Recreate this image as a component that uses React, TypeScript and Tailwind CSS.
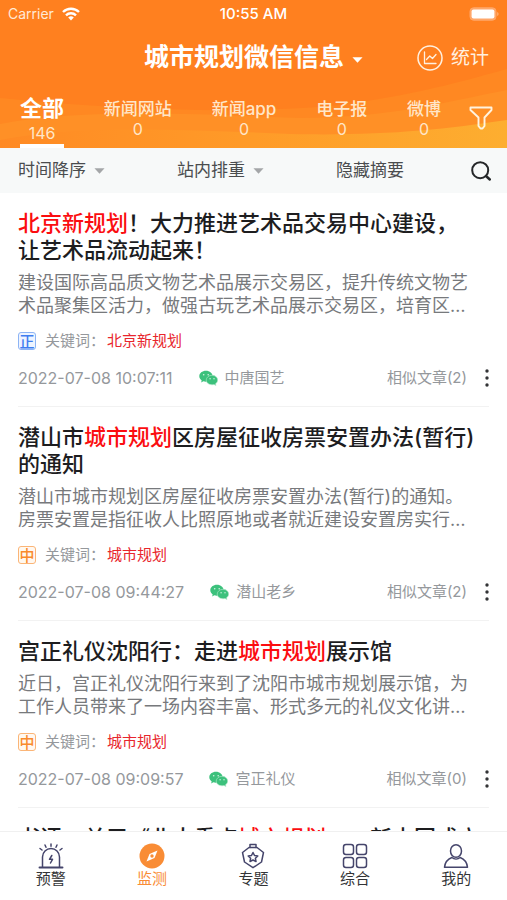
import React from 'react';
import clsx from 'clsx';

interface Article {
  title: string;
  summary: string;
  keyword: string;
  tone?: '正' | '中';
  time: string;
  source: string;
  similar: number;
}

const channels = [
  { name: '全部', count: 146 },
  { name: '新闻网站', count: 0 },
  { name: '新闻app', count: 0 },
  { name: '电子报', count: 0 },
  { name: '微博', count: 0 },
];

const articles: Article[] = [
  {
    title: '北京新规划！大力推进艺术品交易中心建设，\n让艺术品流动起来！',
    summary: '建设国际高品质文物艺术品展示交易区，提升传统文物艺\n术品聚集区活力，做强古玩艺术品展示交易区，培育区…',
    keyword: '北京新规划',
    tone: '正',
    time: '2022-07-08 10:07:11',
    source: '中唐国艺',
    similar: 2,
  },
  {
    title: '潜山市城市规划区房屋征收房票安置办法(暂行)\n的通知',
    summary: '潜山市城市规划区房屋征收房票安置办法(暂行)的通知。\n房票安置是指征收人比照原地或者就近建设安置房实行…',
    keyword: '城市规划',
    tone: '中',
    time: '2022-07-08 09:44:27',
    source: '潜山老乡',
    similar: 2,
  },
  {
    title: '宫正礼仪沈阳行：走进城市规划展示馆',
    summary: '近日，宫正礼仪沈阳行来到了沈阳市城市规划展示馆，为\n工作人员带来了一场内容丰富、形式多元的礼仪文化讲…',
    keyword: '城市规划',
    tone: '中',
    time: '2022-07-08 09:09:57',
    source: '宫正礼仪',
    similar: 0,
  },
  {
    title: '书评：关于《北大重点城市规划——新中国成立',
    summary: '',
    keyword: '城市规划',
    time: '',
    source: '',
    similar: 0,
  },
];

function Caret({ className }: { className?: string }) {
  return (
    <svg viewBox="0 0 12 6" className={clsx('shrink-0', className)} fill="currentColor">
      <path d="M0.5 0h11L6 6z" />
    </svg>
  );
}

function StatusBar() {
  return (
    <div className="grid h-7 grid-cols-3 items-center px-2 text-sm">
      <div className="flex items-center gap-2 text-[#ffe9d6]">
        <span>Carrier</span>
        <svg viewBox="0 0 18 14" className="h-[14px] w-[18px]" fill="none" stroke="white" strokeWidth="2.4">
          <path d="M1 5a11.5 11.5 0 0 1 16 0" />
          <path d="M4 8.3a7.2 7.2 0 0 1 10 0" />
          <path d="M9 13.4 6.2 10.6a4 4 0 0 1 5.6 0z" fill="white" stroke="none" />
        </svg>
      </div>
      <span className="text-center text-[15px] font-medium text-white">10:55 AM</span>
      <svg viewBox="0 0 30 14" className="h-[14px] w-[30px] justify-self-end">
        <rect x="1" y="0.8" width="26" height="12.4" rx="3.5" fill="#ffa76a" stroke="#ffa76a" />
        <rect x="2.6" y="2.4" width="22.8" height="9.2" rx="2" fill="white" />
        <path d="M28.3 5v4c1.6-.6 1.6-3.4 0-4z" fill="#ffb98a" />
      </svg>
    </div>
  );
}

function Header() {
  return (
    <header className="relative bg-[#ff801f] text-white">
      <svg viewBox="0 0 507 148" preserveAspectRatio="none" className="absolute inset-0 h-full w-full">
        <defs>
          <linearGradient id="wave" x1="0" x2="1">
            <stop offset="0" stopColor="#ff8a24" />
            <stop offset="0.5" stopColor="#ff9b28" />
            <stop offset="1" stopColor="#fdae30" />
          </linearGradient>
        </defs>
        <path d="M0 98C120 110 240 114 330 106C400 98 450 85 507 69V148H0z" fill="#ff8822" />
        <path d="M0 124C80 108 200 114 300 118C390 118 450 101 507 90V148H0z" fill="#ff9026" />
        <path d="M0 140C80 124 190 130 290 134C380 136 440 130 507 120V148H0z" fill="url(#wave)" />
      </svg>
      <div className="relative">
        <StatusBar />
        <div className="grid h-[60px] grid-cols-[1fr_auto_1fr] items-center px-[18px]">
          <button className="col-start-2 flex items-center gap-2 text-[25px] font-bold">
            城市规划微信信息
            <Caret className="mt-1 h-[6px] w-[11px]" />
          </button>
          <button className="flex items-center gap-2 justify-self-end text-[19px] text-[#fff0e0]">
            <svg viewBox="0 0 26 26" className="h-[26px] w-[26px]" fill="none" stroke="currentColor" strokeLinecap="round" strokeLinejoin="round">
              <circle cx="13" cy="13" r="12" strokeWidth="1.5" />
              <path d="M7.5 7v11.5H19" strokeWidth="1.3" />
              <path d="M9.5 14.5l3.3-3.5 2.7 2.5 3.5-4" strokeWidth="1.3" />
            </svg>
            统计
          </button>
        </div>
        <nav className="flex h-[60px] items-stretch pr-[14px] pl-5">
          <div className="flex flex-1 justify-between">
            {channels.map((channel, i) => (
              <button
                key={channel.name}
                className={clsx(
                  'flex flex-col items-center',
                  i === 0 ? 'border-b-4 border-white' : 'pt-[9px] text-[#ffe6c8]'
                )}
              >
                <span className={i === 0 ? 'pt-1 text-[22px] leading-8 font-bold' : 'text-[17px] leading-6 font-medium'}>
                  {channel.name}
                </span>
                <span className={clsx('text-base leading-4', i === 0 && 'pt-px text-[#ffe6c8]')}>{channel.count}</span>
              </button>
            ))}
          </div>
          <button aria-label="筛选" className="ml-7">
            <svg viewBox="0 0 24 24" className="h-6 w-6" fill="none" stroke="#fff3df" strokeWidth="1.9" strokeLinejoin="round">
              <path d="M1.5 1.5h21v2.5L15.500 11.500v8.500l-2 2.500h-2l-2-2.500V11.500L1.5 4z" />
            </svg>
          </button>
        </nav>
      </div>
    </header>
  );
}

function FilterBar() {
  return (
    <div className="grid h-[45px] grid-cols-3 items-center bg-[#f7f9f9] pr-3 pl-[18px] text-[17px] text-[#4a4c4e]">
      <button className="flex items-center gap-2">
        时间降序
        <Caret className="h-[6px] w-[11px] text-[#a4a6a8]" />
      </button>
      <button className="flex items-center gap-2">
        站内排重
        <Caret className="h-[6px] w-[11px] text-[#a4a6a8]" />
      </button>
      <div className="flex items-center justify-between">
        <button>隐藏摘要</button>
        <button aria-label="搜索" className="mr-1">
          <svg viewBox="0 0 20 20" className="h-5 w-5" fill="none" stroke="#252729" strokeWidth="2" strokeLinecap="round">
            <circle cx="9.2" cy="9.2" r="8" />
            <path d="M15 15l3.8 3.5" strokeWidth="2.5" />
          </svg>
        </button>
      </div>
    </div>
  );
}

function WechatIcon() {
  return (
    <svg viewBox="0 0 19 16" className="h-4 w-[19px]">
      <path d="M7 .8C3.2.8.3 3.2.3 6.3c0 1.7.9 3.200 2.4 4.2l-.6 2 2.3-1.2c.8.2 1.6.4 2.6.4 3.7 0 6.7-2.4 6.7-5.4S10.7.8 7 .8z" fill="#3cc17c" />
      <path d="M13 5.3c-3.2 0-5.8 2.1-5.8 4.8s2.6 4.7 5.8 4.7c.7 0 1.4-.1 2-.3l2 1-.5-1.7c1.3-.8 2.2-2.2 2.2-3.7 0-2.7-2.5-4.8-5.7-4.8z" fill="#3cc17c" stroke="#b5e8cd" strokeWidth=".6" />
      <g fill="#d3f3e1">
        <circle cx="4.7" cy="4.7" r=".8" />
        <circle cx="9.2" cy="4.7" r=".8" />
        <circle cx="11.1" cy="8.7" r=".7" />
        <circle cx="15" cy="8.7" r=".7" />
      </g>
    </svg>
  );
}

function ArticleItem({ article }: { article: Article }) {
  const [before, after] = article.title.split(article.keyword);

  return (
    <article className="mx-[18px] border-b border-[#f2f2f2] pt-[17px] pb-[18px]">
      <h2 className="text-[22px] leading-[27px] font-medium whitespace-pre text-[#1d1d1f]">
        {before}
        <span className="text-[#fb0d10]">{article.keyword}</span>
        {after}
      </h2>
      {article.summary && (
        <>
          <p className="mt-[7px] text-lg leading-[23px] whitespace-pre text-[#77797c]">{article.summary}</p>
          <div className="mt-[14px] flex h-5 items-center text-[15px] text-[#95989c]">
            <span
              className={clsx(
                'mr-[9px] flex h-[18px] w-[18px] items-center justify-center rounded-[3px] border text-[15px] leading-none font-medium',
                article.tone === '正'
                  ? 'border-[#8db4f5] bg-[#eef4ff] text-[#3f7df0]'
                  : 'border-[#fbb577] bg-[#fff8f0] text-[#f98a2c]'
              )}
            >
              {article.tone}
            </span>
            关键词：
            <span className="ml-0.5 text-[#e8262d]">{article.keyword}</span>
          </div>
          <div className="mt-[17px] flex h-5 items-center text-[15px] text-[#95989c]">
            <time className="text-base">{article.time}</time>
            <span className="ml-[26px] flex items-center gap-[7px]">
              <WechatIcon />
              {article.source}
            </span>
            <span className="ml-auto">相似文章({article.similar})</span>
            <button aria-label="更多" className="ml-[18px]">
              <svg viewBox="0 0 4 18" className="h-[18px] w-1" fill="#333436">
                <circle cx="2" cy="2" r="1.7" />
                <circle cx="2" cy="9" r="1.7" />
                <circle cx="2" cy="16" r="1.7" />
              </svg>
            </button>
          </div>
        </>
      )}
    </article>
  );
}

const iconProps = {
  viewBox: '0 0 26 26',
  className: 'h-[26px] w-[26px]',
  fill: 'none',
  stroke: '#45456b',
  strokeWidth: 1.5,
  strokeLinecap: 'round',
  strokeLinejoin: 'round',
} as const;

const tabs = [
  {
    name: '预警',
    icon: (
      <svg {...iconProps}>
        <path d="M1.5 24.5h23" strokeWidth="1.9" />
        <path d="M4.5 24V14a8.500 8.500 0 0 1 17 0v10" />
        <path d="M13.800 12.500l-2.300 3.800h3L12.500 20" />
        <path d="M2 5.500l2 1.500M7 2l1 2.200M13 1v2.200M19 2l-1 2.200M24 5.500l-2 1.500" />
      </svg>
    ),
  },
  {
    name: '监测',
    icon: (
      <svg viewBox="0 0 26 26" className="h-[26px] w-[26px]">
        <circle cx="13" cy="13" r="12.5" fill="#f98c35" />
        <path d="M18.5 7.5L15.5 15 7.5 18.5 10.5 11z" fill="white" />
        <circle cx="13" cy="13" r="1.7" fill="#f98c35" />
      </svg>
    ),
  },
  {
    name: '专题',
    icon: (
      <svg {...iconProps}>
        <path d="M10 4.500V1.500h6v3" />
        <path d="M9 4.500h8L23.500 9.500 21.500 19 13 24.700 4.500 19 2.500 9.500z" />
        <path d="M13 9.500l1.500 3 3.300.5-2.400 2.300.6 3.200-3-1.500-3 1.500.6-3.200-2.400-2.300 3.300-.5z" />
      </svg>
    ),
  },
  {
    name: '综合',
    icon: (
      <svg {...iconProps}>
        <rect x="1.500" y="1.500" width="10" height="10" rx="2.500" />
        <rect x="14.500" y="1.500" width="10" height="10" rx="2.500" />
        <rect x="1.500" y="14.500" width="10" height="10" rx="2.500" />
        <rect x="14.500" y="14.500" width="10" height="10" rx="2.500" />
      </svg>
    ),
  },
  {
    name: '我的',
    icon: (
      <svg {...iconProps}>
        <ellipse cx="13" cy="8" rx="5.5" ry="6.3" />
        <path d="M8.8 14.5C5 16 2 19.5 1.5 24.3h23C24 19.5 21 16 17.2 14.5c-2.4 1.9-6 1.9-8.4 0z" />
      </svg>
    ),
  },
];

function TabBar() {
  return (
    <nav className="grid grid-cols-5 border-t border-[#f0f0f0] bg-white pt-[11px] pb-[11px]">
      {tabs.map((tab) => (
        <button
          key={tab.name}
          className={clsx(
            'flex flex-col items-center text-[15px] leading-5',
            tab.name === '监测' ? 'text-[#f98c35]' : 'text-[#333436]'
          )}
        >
          {tab.icon}
          {tab.name}
        </button>
      ))}
    </nav>
  );
}

export default function App() {
  return (
    <div className="flex h-screen flex-col bg-white font-[Inter,'Noto_Sans_CJK_SC',sans-serif]">
      <Header />
      <FilterBar />
      <main className="min-h-0 flex-1 overflow-hidden">
        {articles.map((article) => (
          <ArticleItem key={article.title} article={article} />
        ))}
      </main>
      <TabBar />
    </div>
  );
}
